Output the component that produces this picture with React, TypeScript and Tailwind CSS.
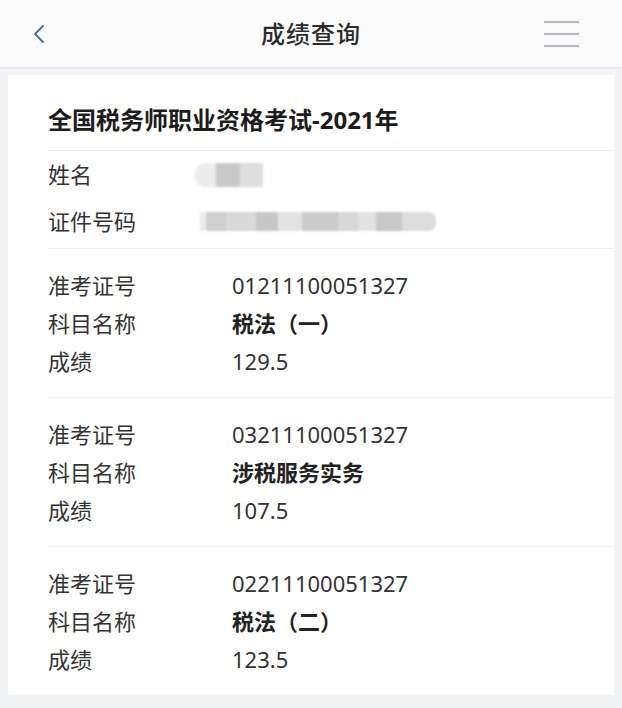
import React from 'react';

type Row = { label: string; value: string; bold?: boolean };

const groups: Row[][] = [
  [
    { label: '准考证号', value: '01211100051327' },
    { label: '科目名称', value: '税法（一）', bold: true },
    { label: '成绩', value: '129.5' },
  ],
  [
    { label: '准考证号', value: '03211100051327' },
    { label: '科目名称', value: '涉税服务实务', bold: true },
    { label: '成绩', value: '107.5' },
  ],
  [
    { label: '准考证号', value: '02211100051327' },
    { label: '科目名称', value: '税法（二）', bold: true },
    { label: '成绩', value: '123.5' },
  ],
];

const Divider = () => <div className="ml-[40px] h-px bg-[#eceef1]" />;

const App: React.FC = () => {
  return (
    <div
      className="h-[708px] w-[622px] overflow-hidden bg-[#f3f4f6] text-[#333]"
      style={{ fontFamily: '"Noto Sans", "Noto Sans CJK SC", sans-serif' }}
    >
      {/* header */}
      <header className="relative flex h-[68px] items-center justify-between border-b border-[#e6e8eb] bg-[#fbfbfc] px-[30px] shadow-[0_1px_2px_rgba(0,0,0,0.04)]">
        <svg width="16" height="22" viewBox="0 0 16 22" className="ml-[1px]">
          <path d="M12 3 L4 11 L12 19" fill="none" stroke="#4a74a3" strokeWidth="2" strokeLinecap="round" strokeLinejoin="round" />
        </svg>
        <h1 className="absolute left-1/2 -translate-x-1/2 text-[24px] font-medium tracking-[1px] text-[#2b2b2b]">成绩查询</h1>
        <div className="mr-[13px] flex w-[35px] flex-col gap-[10px]">
          <span className="h-[2px] bg-[#b9b9bb]" />
          <span className="h-[2px] bg-[#b9b9bb]" />
          <span className="h-[2px] bg-[#b9b9bb]" />
        </div>
      </header>

      {/* card */}
      <main className="mx-2 mt-[7px] bg-white">
        <div className="px-[40px] pt-[30px] pb-[15px]">
          <h2 className="text-[24px] font-bold leading-[30px] text-[#1c1c1c]">全国税务师职业资格考试-2021年</h2>
        </div>
        <Divider />
        <div className="px-[40px] pb-[3px]">
          <div className="flex h-[47px] items-center text-[22px]">
            <span className="w-[147px]">姓名</span>
            <div className="flex h-[24px] blur-[1px]">
              <span className="w-[21px] rounded-l-[10px] bg-[#ececec]" />
              <span className="w-[24px] bg-[#c9c9c9]" />
              <span className="w-[23px] bg-[#dedede]" />
            </div>
          </div>
          <div className="flex h-[47px] items-center text-[22px]">
            <span className="w-[152px]">证件号码</span>
            <div className="flex h-[19px] blur-[1.2px]">
              <span className="w-[6px] bg-[#ececec]" />
              <span className="w-[20px] bg-[#cfcfcf]" />
              <span className="w-[30px] bg-[#d9d9d9]" />
              <span className="w-[22px] bg-[#c6c6c6]" />
              <span className="w-[24px] bg-[#e3e3e3]" />
              <span className="w-[36px] bg-[#cbcbcb]" />
              <span className="w-[20px] bg-[#d8d8d8]" />
              <span className="w-[18px] bg-[#e2e2e2]" />
              <span className="w-[26px] bg-[#c8c8c8]" />
              <span className="w-[34px] rounded-r-[8px] bg-[#dcdcdc]" />
            </div>
          </div>
        </div>
        {groups.map((g, i) => (
          <div key={i}>
            <Divider />
            <div className="px-[40px] py-[17px]">
              {g.map((r) => (
                <div key={r.label} className="flex h-[38px] items-center text-[22px]">
                  <span className="w-[184px] shrink-0">{r.label}</span>
                  <span className={r.bold ? 'font-bold text-[#222]' : ''}>{r.value}</span>
                </div>
              ))}
            </div>
          </div>
        ))}
      </main>
    </div>
  );
};

export default App;
